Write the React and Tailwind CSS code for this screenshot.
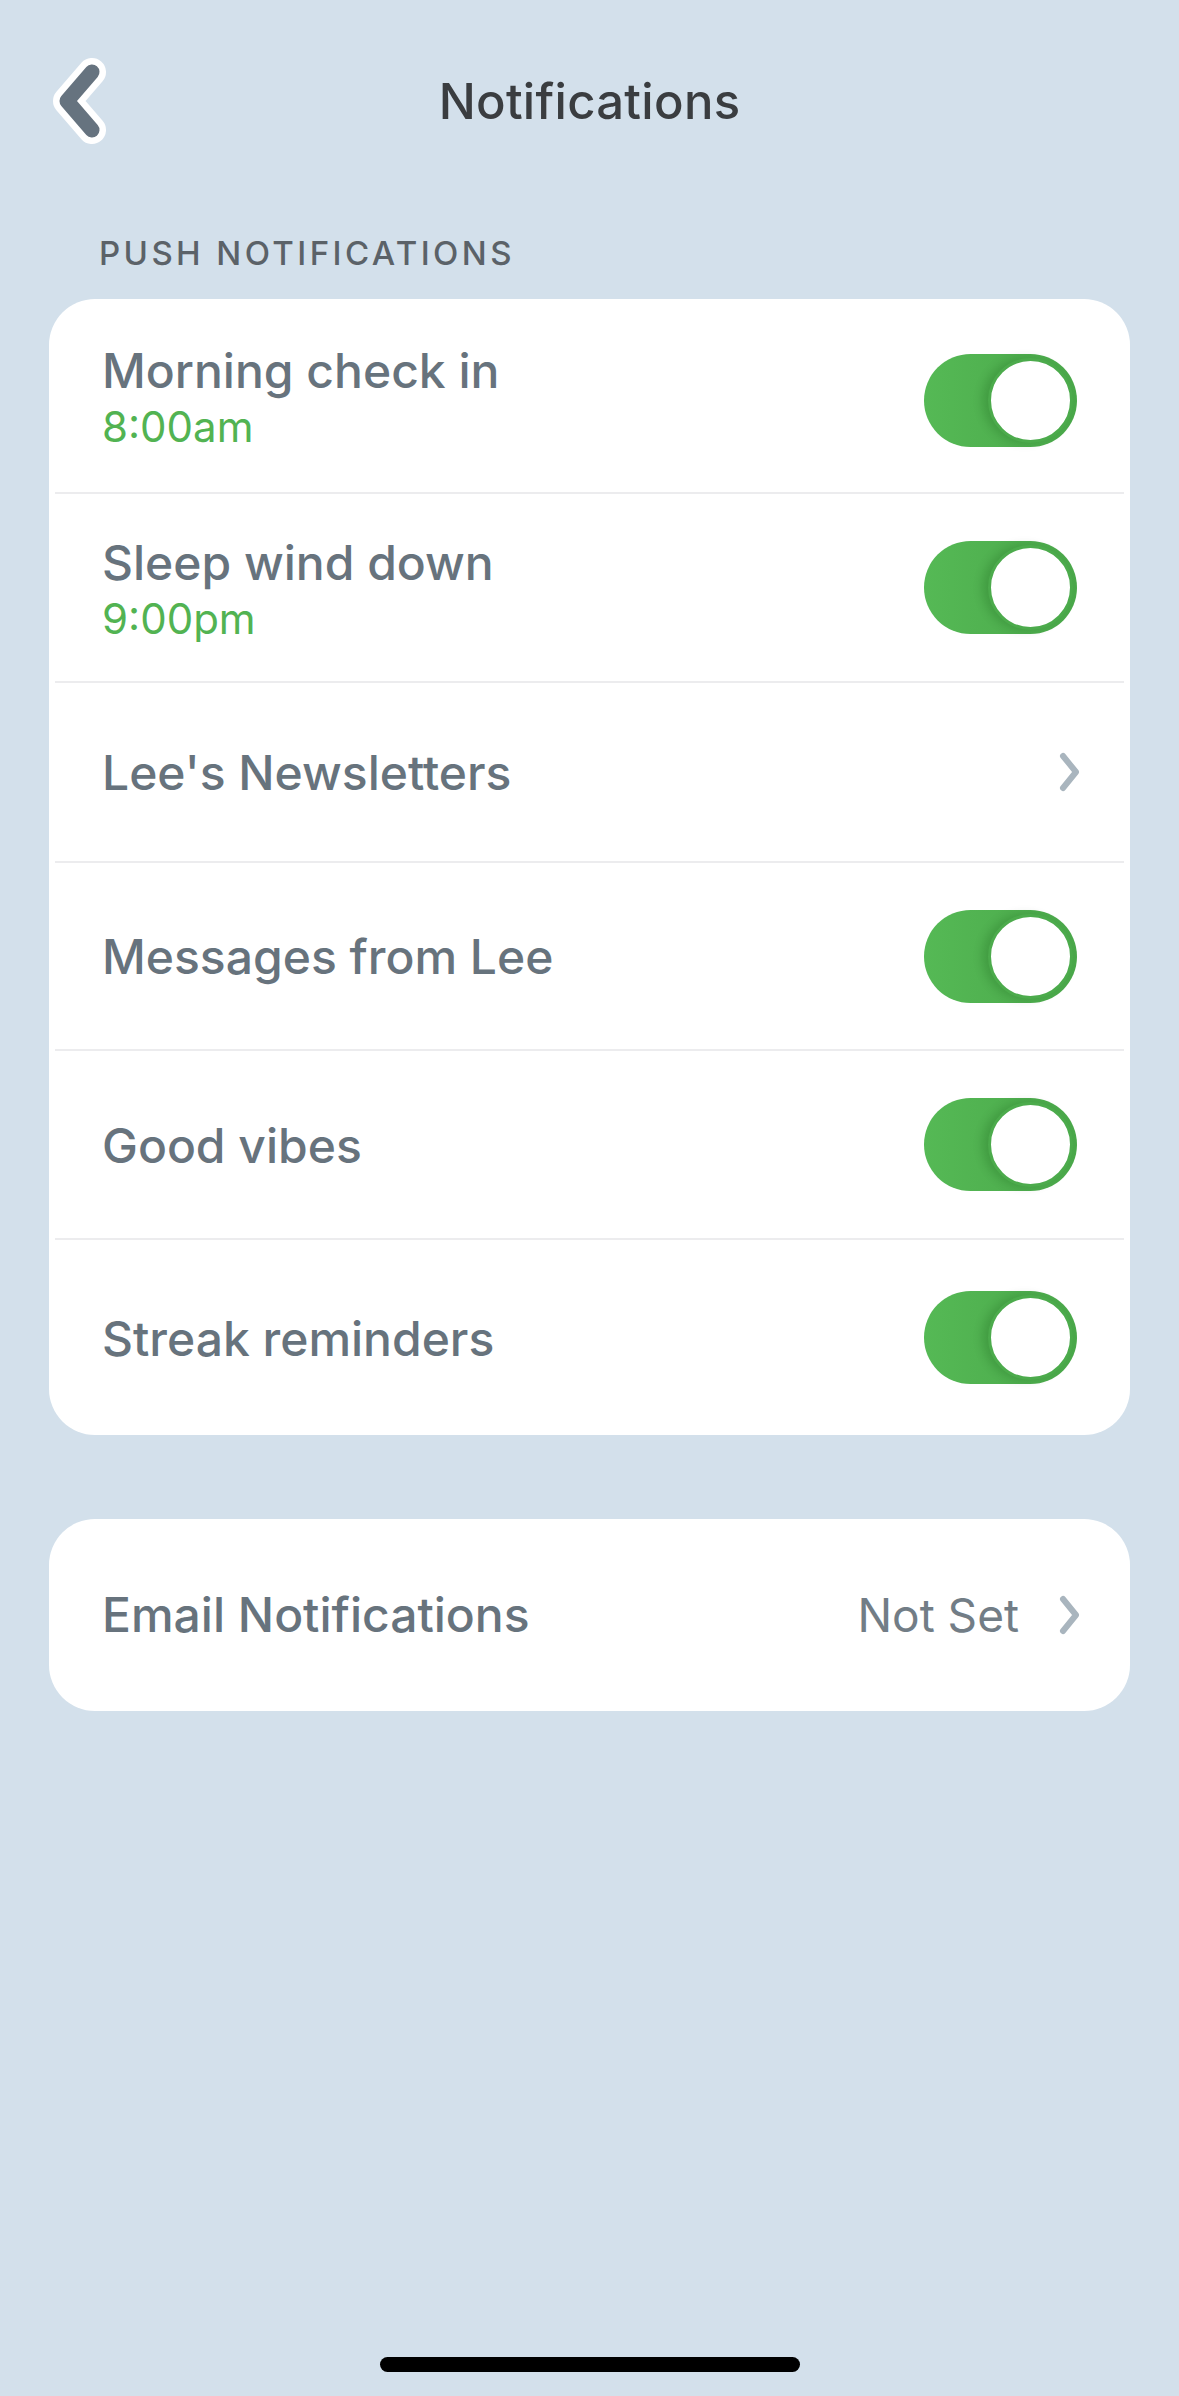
import React from 'react';

const Toggle = ({ shift }) => (
  <div className={`relative w-[153px] h-[93px] rounded-full bg-gradient-to-r from-[#55b955] to-[#4aa84a] shrink-0 ${shift ? 'mt-[10px]' : ''}`}>
    <div className="absolute right-[4px] top-[4px] w-[85px] h-[85px] rounded-full bg-white border-[3px] border-[#4cab4c] shadow-[-6px_0_10px_rgba(0,60,0,0.18)]" />
  </div>
);

const Chevron = () => (
  <svg width="26" height="40" viewBox="0 0 26 40" className="shrink-0">
    <path d="M6 4 L19 20 L6 36" fill="none" stroke="#a9b5be" strokeWidth="6" strokeLinecap="round" strokeLinejoin="round" />
  </svg>
);

const Divider = () => <div className="mx-[6px] h-[2px] bg-[#ececee]" />;

const rows = [
  { title: 'Morning check in', sub: '8:00am', h: 'h-[193px]', kind: 'toggle', shift: true },
  { title: 'Sleep wind down', sub: '9:00pm', h: 'h-[187px]', kind: 'toggle' },
  { title: "Lee's Newsletters", h: 'h-[178px]', kind: 'link' },
  { title: 'Messages from Lee', h: 'h-[186px]', kind: 'toggle' },
  { title: 'Good vibes', h: 'h-[187px]', kind: 'toggle' },
  { title: 'Streak reminders', h: 'h-[195px]', kind: 'toggle' },
];

export default function App() {
  return (
    <div className="relative min-h-[2396px] bg-[#d3e0eb] font-['Inter',sans-serif]">
      {/* Header */}
      <div className="relative h-[204px] flex items-center justify-center">
        <button className="absolute left-[47px] top-[55px]">
          <svg width="66" height="92" viewBox="0 0 66 92">
            <path d="M45 17 L20 46 L45 75" fill="none" stroke="#ffffff" strokeWidth="28" strokeLinecap="round" strokeLinejoin="round" />
            <path d="M45 17 L20 46 L45 75" fill="none" stroke="#66737f" strokeWidth="15" strokeLinecap="round" strokeLinejoin="round" />
          </svg>
        </button>
        <h1 className="text-[49px] font-medium text-[#3a3d40] tracking-[0.3px]">Notifications</h1>
      </div>

      <div className="px-[49px]">
        <div className="mt-[29px] pl-[50px] text-[33px] leading-[40px] font-medium tracking-[3.4px] text-[#5b6268]">
          PUSH NOTIFICATIONS
        </div>

        {/* Push card */}
        <div className="mt-[26px] bg-white rounded-[46px] overflow-hidden">
          {rows.map((r, i) => (
            <div key={r.title}>
              {i > 0 && <Divider />}
              <div className={`${r.h} flex items-center justify-between pl-[53px] ${r.kind === 'toggle' ? 'pr-[53px]' : 'pr-[47px]'}`}>
                <div className={`flex flex-col ${r.sub ? 'pt-[8px]' : 'pt-[2px]'}`}>
                  <span className="text-[48px] leading-[54px] font-medium text-[#67737d]">{r.title}</span>
                  {r.sub && <span className="text-[42px] leading-[58px] text-[#52b352]">{r.sub}</span>}
                </div>
                {r.kind === 'toggle' ? <Toggle shift={r.shift} /> : <Chevron />}
              </div>
            </div>
          ))}
        </div>

        {/* Email card */}
        <div className="mt-[84px] h-[192px] bg-white rounded-[46px] flex items-center justify-between pl-[53px] pr-[47px]">
          <span className="text-[48px] font-medium text-[#67737d]">Email Notifications</span>
          <div className="flex items-center gap-[38px]">
            <span className="text-[46px] text-[#727d86]">Not Set</span>
            <Chevron />
          </div>
        </div>
      </div>

      {/* Home indicator */}
      <div className="absolute left-[380px] top-[2357px] w-[420px] h-[15px] rounded-full bg-black" />
    </div>
  );
}
